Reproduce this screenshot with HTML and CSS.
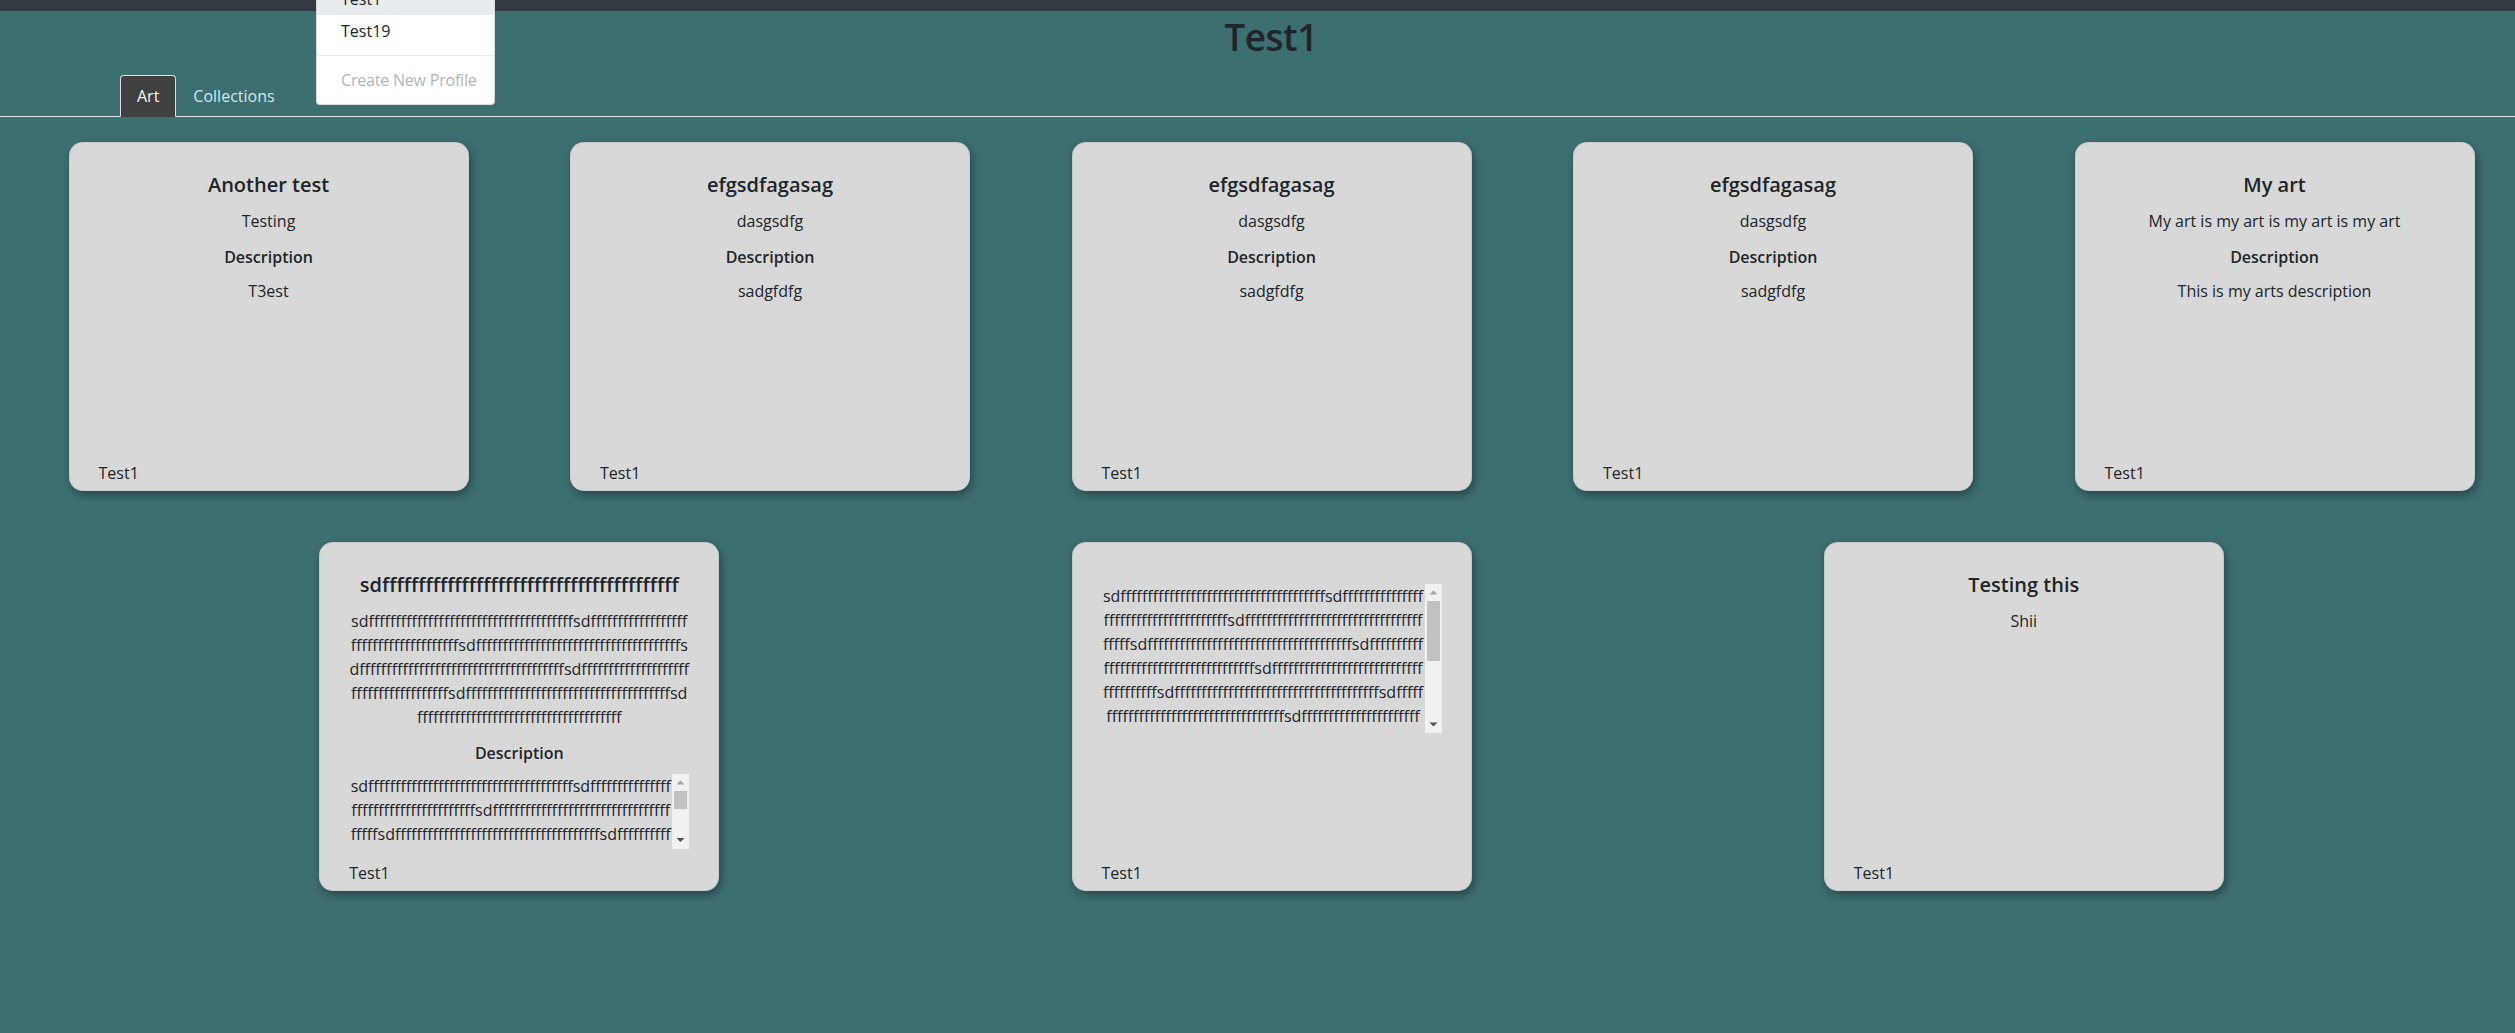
FILE: index.html
```html
<!DOCTYPE html>
<html lang="en">
<head>
<meta charset="utf-8">
<title>Test1</title>
<link rel="stylesheet" href="styles.css">
</head>
<body>
<div class="topbar"></div>
<ul class="profile-menu">
  <li class="menu-item active">Test1</li>
  <li class="menu-item">Test19</li>
  <li class="menu-divider"></li>
  <li class="menu-item disabled">Create New Profile</li>
</ul>
<main class="page">
  <h1 class="page-title">Test1</h1>
  <ul class="tabs">
    <li class="tab active">Art</li>
    <li class="tab">Collections</li>
  </ul>
  <div class="gallery">
    <div class="gallery-row">
      <div class="card">
        <h5 class="card-title">Another test</h5>
        <p class="card-text">Testing</p>
        <h6 class="card-label">Description</h6>
        <p class="card-desc">T3est</p>
        <div class="card-owner">Test1</div>
      </div>
      <div class="card">
        <h5 class="card-title">efgsdfagasag</h5>
        <p class="card-text">dasgsdfg</p>
        <h6 class="card-label">Description</h6>
        <p class="card-desc">sadgfdfg</p>
        <div class="card-owner">Test1</div>
      </div>
      <div class="card">
        <h5 class="card-title">efgsdfagasag</h5>
        <p class="card-text">dasgsdfg</p>
        <h6 class="card-label">Description</h6>
        <p class="card-desc">sadgfdfg</p>
        <div class="card-owner">Test1</div>
      </div>
      <div class="card">
        <h5 class="card-title">efgsdfagasag</h5>
        <p class="card-text">dasgsdfg</p>
        <h6 class="card-label">Description</h6>
        <p class="card-desc">sadgfdfg</p>
        <div class="card-owner">Test1</div>
      </div>
      <div class="card">
        <h5 class="card-title">My art</h5>
        <p class="card-text">My art is my art is my art is my art</p>
        <h6 class="card-label">Description</h6>
        <p class="card-desc">This is my arts description</p>
        <div class="card-owner">Test1</div>
      </div>
    </div>
    <div class="gallery-row">
      <div class="card">
        <h5 class="card-title">sdfffffffffffffffffffffffffffffffffffffffff</h5>
        <p class="card-text">sdffffffffffffffffffffffffffffffffffffffsdffffffffffffffffffffffffffffffffffffffsdffffffffffffffffffffffffffffffffffffffsdffffffffffffffffffffffffffffffffffffffsdffffffffffffffffffffffffffffffffffffffsdffffffffffffffffffffffffffffffffffffffsdffffffffffffffffffffffffffffffffffffff</p>
        <h6 class="card-label">Description</h6>
        <div class="scrollbox scrollbox-desc">
          <div class="scroll-text">sdffffffffffffffffffffffffffffffffffffffsdffffffffffffffffffffffffffffffffffffffsdffffffffffffffffffffffffffffffffffffffsdffffffffffffffffffffffffffffffffffffffsdffffffffff</div>
          <div class="scrollbar">
            <span class="sb-btn"><svg width="17" height="17" viewBox="0 0 17 17"><path d="M4.5 10.5 L8.5 6.5 L12.5 10.5 Z" fill="#a3a3a3"/></svg></span>
            <span class="sb-track"><span class="sb-thumb" style="height:18px"></span></span>
            <span class="sb-btn"><svg width="17" height="17" viewBox="0 0 17 17"><path d="M4.5 6 L12.5 6 L8.5 10 Z" fill="#505050"/></svg></span>
          </div>
        </div>
        <div class="card-owner">Test1</div>
      </div>
      <div class="card">
        <h5 class="card-title"></h5>
        <div class="scrollbox scrollbox-text">
          <div class="scroll-text">sdffffffffffffffffffffffffffffffffffffffsdffffffffffffffffffffffffffffffffffffffsdffffffffffffffffffffffffffffffffffffffsdffffffffffffffffffffffffffffffffffffffsdffffffffffffffffffffffffffffffffffffffsdffffffffffffffffffffffffffffffffffffffsdffffffffffffffffffffffffffffffffffffffsdffffffffffffffffffffffffffffffffffffffsdffffffffffffffffffffff</div>
          <div class="scrollbar">
            <span class="sb-btn"><svg width="17" height="17" viewBox="0 0 17 17"><path d="M4.5 10.5 L8.5 6.5 L12.5 10.5 Z" fill="#a3a3a3"/></svg></span>
            <span class="sb-track"><span class="sb-thumb" style="height:60px"></span></span>
            <span class="sb-btn"><svg width="17" height="17" viewBox="0 0 17 17"><path d="M4.5 6.5 L12.5 6.5 L8.5 10.5 Z" fill="#505050"/></svg></span>
          </div>
        </div>
        <div class="card-owner">Test1</div>
      </div>
      <div class="card">
        <h5 class="card-title">Testing this</h5>
        <p class="card-text">Shii</p>
        <div class="card-owner">Test1</div>
      </div>
    </div>
  </div>
</main>
</body>
</html>
```

FILE: styles.css
```css
html, body {
  margin: 0;
  padding: 0;
  overflow-x: hidden;
}

body {
  position: relative;
  min-height: 1033px;
  background: #3d6e70;
  color: #212529;
  font-family: "Open Sans", "Noto Sans", "Liberation Sans", sans-serif;
  font-size: 16px;
  line-height: 24px;
}

.topbar {
  height: 11px;
  background: #343a40;
}

/* dropdown menu overlapping the header */
.profile-menu {
  position: absolute;
  left: 316px;
  top: -26px;
  z-index: 10;
  width: 179px;
  box-sizing: border-box;
  margin: 0;
  padding: 8px 0;
  list-style: none;
  background: #fff;
  border: 1px solid rgba(0, 0, 0, 0.15);
  border-radius: 4px;
}

.menu-item {
  padding: 4px 24px;
  color: #212529;
  white-space: nowrap;
}

.menu-item.active {
  background: #e9ecef;
}

.menu-item.disabled {
  color: #adb5bd;
  letter-spacing: -0.2px;
}

.menu-divider {
  height: 0;
  margin: 8px 0;
  border-top: 1px solid #e9ecef;
}

.page-title {
  margin: 2px 0 0;
  padding-left: 27px;
  text-align: center;
  font-size: 37px;
  font-weight: 600;
  line-height: 47px;
  letter-spacing: -0.5px;
  color: #212529;
}

.tabs {
  display: flex;
  margin: 15px 0 0;
  padding: 0 0 0 120px;
  list-style: none;
  border-bottom: 1px solid #dee2e6;
}

.tab {
  margin-bottom: -1px;
  padding: 8px 16px;
  border: 1px solid transparent;
  border-radius: 4px 4px 0 0;
  color: #d3e6f0;
}

.tab.active {
  background: #404040;
  border-color: #dee2e6 #dee2e6 #404040;
  color: #f2f2f2;
}

.gallery {
  display: flex;
  flex-direction: column;
  gap: 51px;
  margin: 0 -61px 0 -33px;
  padding-top: 25px;
}

.gallery-row {
  display: flex;
  justify-content: space-evenly;
}

.card {
  display: flex;
  flex-direction: column;
  width: 400px;
  height: 349px;
  box-sizing: border-box;
  padding: 30px 29px 5px;
  background: #d8d8d8;
  border: 1px solid rgba(0, 0, 0, 0.06);
  border-radius: 14px;
  box-shadow: 2px 4px 8px rgba(0, 0, 0, 0.35);
  text-align: center;
}

.card-title {
  margin: -1px 0 12px;
  font-size: 20px;
  font-weight: 600;
  line-height: 25px;
}

.card-text {
  margin: 0;
  word-break: break-all;
}

.card-label {
  margin: 12px 0 0;
  font-size: 16px;
  font-weight: 600;
  line-height: 24px;
}

.card-desc {
  margin: 10px 0 0;
  word-break: break-all;
}

.card-owner {
  margin-top: auto;
  text-align: left;
}

.scrollbox {
  display: flex;
}

.scrollbox-desc {
  height: 75px;
  margin-top: 9px;
}

.scrollbox-text {
  height: 149px;
}

.scroll-text {
  flex: 1;
  overflow: hidden;
  word-break: break-all;
  text-align: center;
}

.scrollbar {
  display: flex;
  flex-direction: column;
  width: 17px;
  flex: none;
  background: #f1f1f1;
}

.sb-btn {
  display: block;
  height: 17px;
  flex: none;
}

.sb-btn svg {
  display: block;
}

.sb-track {
  flex: 1;
  display: block;
}

.sb-thumb {
  display: block;
  margin: 0 2px;
  background: #c1c1c1;
}
```
